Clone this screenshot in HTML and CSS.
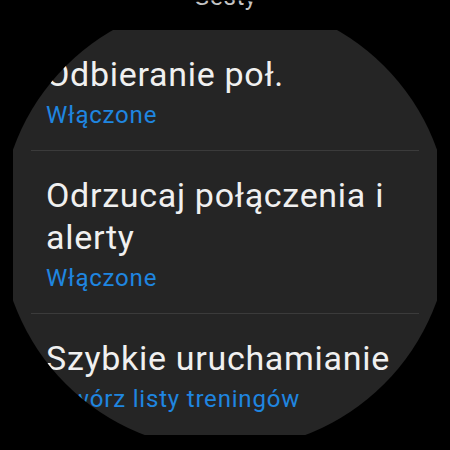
FILE: index.html
```html
<!DOCTYPE html>
<html lang="pl">
<head>
    <meta charset="UTF-8">
    <meta name="viewport" content="width=device-width, initial-scale=1.0">
    <title>Gesty</title>
    <link rel="stylesheet" href="styles.css">
</head>
<body>
    <div id="watchScreen">
        <h1 class="screen-title">Gesty</h1>
        <ul class="settings-list">
            <li class="setting">
                <p class="setting-name">Odbieranie poł.</p>
                <p class="setting-value">Włączone</p>
            </li>
            <li class="setting">
                <p class="setting-name">Odrzucaj połączenia i alerty</p>
                <p class="setting-value">Włączone</p>
            </li>
            <li class="setting">
                <p class="setting-name">Szybkie uruchamianie</p>
                <p class="setting-value">Utwórz listy treningów</p>
            </li>
        </ul>
    </div>
</body>
</html>
```

FILE: styles.css
```css
body {
    margin: 0;
    background-color: #000;
    font-family: Roboto, "Noto Sans", sans-serif;
}

#watchScreen {
    width: 450px;
    height: 450px;
    border-radius: 50%;
    overflow: hidden;
    background-color: #000;
}

.screen-title {
    margin: -18px 0 0;
    height: 48px;
    font-size: 24px;
    font-weight: 400;
    line-height: 30px;
    letter-spacing: 0.6px;
    text-align: center;
    color: #c4c4c4;
}

.settings-list {
    list-style: none;
    margin: 0 13px;
    padding: 0 18px;
    height: 405px;
    background-color: #252525;
}

.setting {
    padding: 23px 15px 20px;
    border-top: 1px solid #3b3b3b;
}

.setting:first-child {
    border-top: none;
}

.setting p {
    margin: 0;
}

.setting-name {
    font-size: 34px;
    line-height: 42px;
    letter-spacing: 0.7px;
    color: #f0f0f0;
}

.setting .setting-value {
    margin-top: 5px;
    font-size: 24px;
    line-height: 30px;
    letter-spacing: 0.8px;
    color: #1f86e0;
}
```
